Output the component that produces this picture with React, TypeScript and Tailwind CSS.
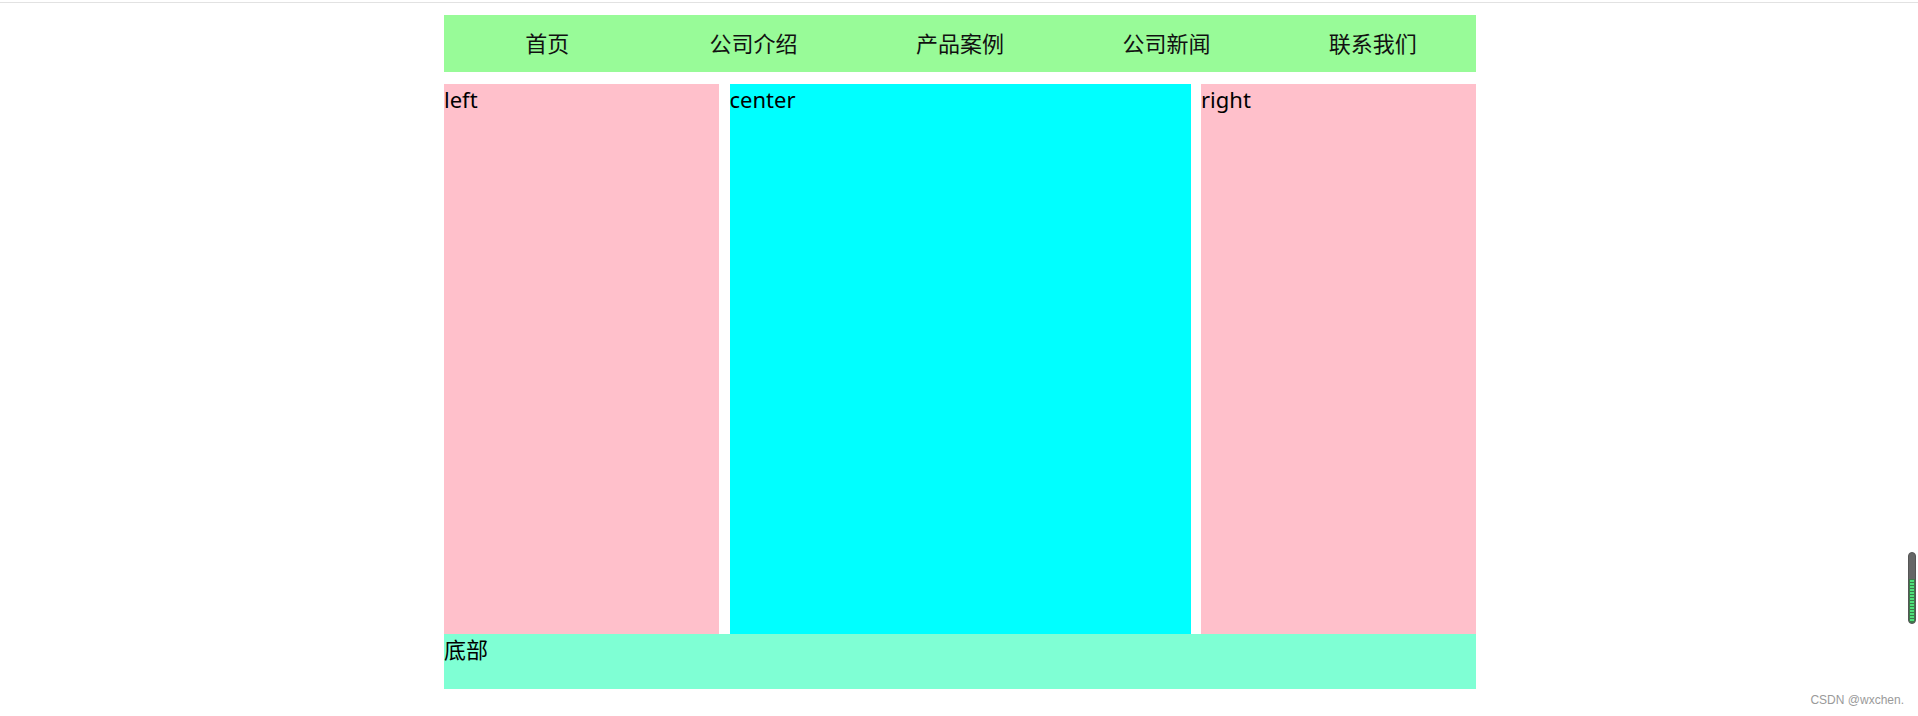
export default function App() {
  const navItems = ["首页", "公司介绍", "产品案例", "公司新闻", "联系我们"];

  return (
    <div
      className="relative min-h-screen bg-white text-black"
      style={{ fontFamily: '"Noto Sans", "Noto Sans CJK SC", sans-serif' }}
    >
      {/* browser chrome edge */}
      <div className="h-[3px] border-b border-[#e2e2e2]" />

      <div className="ml-[444px] w-[1032px] pt-[12px]">
        {/* nav */}
        <div className="flex h-[57px] items-center bg-[#98fb98]">
          {navItems.map((item) => (
            <div key={item} className="flex-1 text-center text-[22px] leading-[29px] text-[#111]">
              {item}
            </div>
          ))}
        </div>

        {/* three columns */}
        <div className="mt-[12px] flex h-[550px] justify-between">
          <div className="w-[275px] bg-[#ffc0cb] text-[22px] leading-[30px]">left</div>
          <div className="w-[461px] bg-[#00ffff] text-[22px] leading-[30px]">center</div>
          <div className="w-[275px] bg-[#ffc0cb] text-[22px] leading-[30px]">right</div>
        </div>

        {/* footer */}
        <div className="h-[55px] bg-[#7fffd4] text-[22px] leading-[30px]">底部</div>
      </div>

      {/* floating scroll widget */}
      <div className="absolute left-[1908px] top-[552px] flex h-[72px] w-[8px] flex-col overflow-hidden rounded-full border border-[#555] bg-[#666]">
        <div className="h-[26px]" />
        <div className="flex flex-1 flex-col gap-[1px] bg-[#3d7a4a] px-[1px] py-[1px]">
          {Array.from({ length: 14 }).map((_, i) => (
            <div key={i} className="h-[2px] bg-[#4ee07a]" />
          ))}
        </div>
      </div>

      {/* watermark */}
      <div
        className="absolute right-[14px] top-[693px] text-[12px] leading-[15px] text-[#9a9a9a]"
        style={{ fontFamily: '"Liberation Sans", sans-serif' }}
      >
        CSDN @wxchen.
      </div>
    </div>
  );
}
